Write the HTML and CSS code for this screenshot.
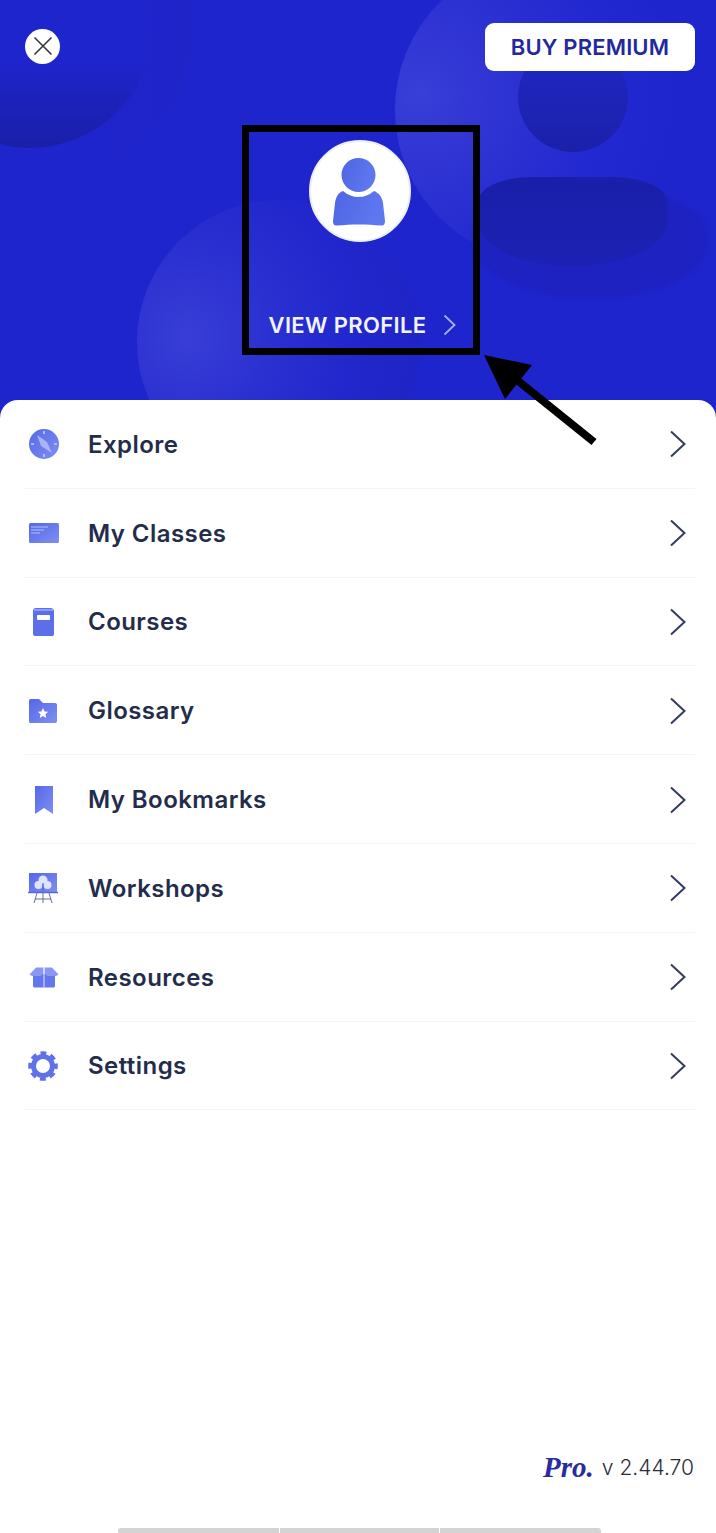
FILE: index.html
```html
<!DOCTYPE html>
<html lang="en">
<head>
<meta charset="utf-8">
<title>Menu</title>
<link rel="stylesheet" href="styles.css">
</head>
<body>
<svg class="defs" width="0" height="0" aria-hidden="true">
  <defs>
    <linearGradient id="g" x1="0" y1="0" x2="1" y2="1">
      <stop offset="0" stop-color="#5468e6"/>
      <stop offset="1" stop-color="#7f8ff2"/>
    </linearGradient>
    <linearGradient id="av" x1="0" y1="0" x2="1" y2="0.3">
      <stop offset="0" stop-color="#4f64e4"/>
      <stop offset="1" stop-color="#5f78f0"/>
    </linearGradient>
  </defs>
</svg>
<div class="app">
  <header class="hero">
    <span class="shape shape-tl-halo"></span>
    <span class="shape shape-tl"></span>
    <span class="shape shape-sphere-r"></span>
    <span class="shape shape-sphere-b"></span>
    <span class="shape shape-halo"></span>
    <span class="shape shape-head"></span>
    <span class="shape shape-body"></span>
    <div class="topbar">
      <button class="close" aria-label="Close">
        <svg width="22" height="22" viewBox="0 0 22 22"><path d="M2.500 2.500 19.500 19.500M19.500 2.500 2.500 19.500" fill="none" stroke="#33363f" stroke-width="1.600"/></svg>
      </button>
      <button class="premium">BUY PREMIUM</button>
    </div>
    <div class="profile">
      <div class="avatar">
        <svg width="54" height="68" viewBox="0 0 54 68">
          <circle cx="26.500" cy="17" r="17" fill="url(#av)"/>
          <path d="M11 33C16 37 21 39 26.500 39S37 37 42 33C47 35 50 39 51 45L53 63C53 66 52 68 49 67.500C36 66 18 66 5 67.500C2 68 1 66 1 63L3 45C4 39 6 35 11 33Z" fill="url(#av)"/>
        </svg>
      </div>
      <div class="view">
        <span>VIEW PROFILE</span>
        <svg width="13" height="22" viewBox="0 0 13 22"><path d="M1.500 1.500 11.500 11 1.500 20.500" fill="none" stroke="#a9aef0" stroke-width="1.800"/></svg>
      </div>
    </div>
  </header>

  <main class="sheet">
    <ul class="menu">
      <li class="row">
        <span class="ico"><svg width="32" height="32" viewBox="0 0 32 32">
          <circle cx="16" cy="16" r="15" fill="url(#g)"/>
          <path d="M9 7 19 14 24 25 13 18Z" fill="#a9b5f7"/>
          <path d="M16 3v3M16 26v3M3 16h3M26 16h3" stroke="#c5cdfb" stroke-width="1.600"/>
        </svg></span>
        <span class="label">Explore</span>
        <svg class="chev" width="18" height="28" viewBox="0 0 18 28"><path d="M2 1.500 15.500 14 2 26.500"/></svg>
      </li>
      <li class="row">
        <span class="ico"><svg width="32" height="22" viewBox="0 0 32 22">
          <rect x="1" y="1" width="30" height="20" rx="1.500" fill="url(#g)"/>
          <path d="M3 5h17M3 8h13M3 11h9" stroke="#b5c0fa" stroke-width="1.200"/>
        </svg></span>
        <span class="label">My Classes</span>
        <svg class="chev" width="18" height="28" viewBox="0 0 18 28"><path d="M2 1.500 15.500 14 2 26.500"/></svg>
      </li>
      <li class="row">
        <span class="ico ico-book"><svg width="24" height="30" viewBox="0 0 24 30">
          <path d="M2 4C2 2 3 1 5 1H20C21 1 23 2 23 4V27C23 28.500 22 29 21 29H4C3 29 2 28 2 27Z" fill="#5b6fe8"/>
          <path d="M3 3h19" stroke="#8d9cf4" stroke-width="2"/>
          <rect x="6" y="8" width="13" height="5" rx="1" fill="#fff"/>
        </svg></span>
        <span class="label">Courses</span>
        <svg class="chev" width="18" height="28" viewBox="0 0 18 28"><path d="M2 1.500 15.500 14 2 26.500"/></svg>
      </li>
      <li class="row">
        <span class="ico"><svg width="30" height="26" viewBox="0 0 30 26">
          <path d="M1 3C1 1.500 2 1 3 1H11L15 5H27C28.500 5 29 6 29 7V23C29 24.500 28 25 27 25H3C2 25 1 24.500 1 23Z" fill="url(#g)"/>
          <path d="M15 10 16.600 13.400 20.200 13.800 17.500 16.300 18.200 20 15 18.100 11.800 20 12.500 16.300 9.800 13.800 13.400 13.400Z" fill="#fff"/>
        </svg></span>
        <span class="label">Glossary</span>
        <svg class="chev" width="18" height="28" viewBox="0 0 18 28"><path d="M2 1.500 15.500 14 2 26.500"/></svg>
      </li>
      <li class="row">
        <span class="ico ico-mark"><svg width="20" height="30" viewBox="0 0 20 30">
          <path d="M1 1H19V29L10 23 1 29Z" fill="url(#g)"/>
        </svg></span>
        <span class="label">My Bookmarks</span>
        <svg class="chev" width="18" height="28" viewBox="0 0 18 28"><path d="M2 1.500 15.500 14 2 26.500"/></svg>
      </li>
      <li class="row">
        <span class="ico"><svg width="30" height="32" viewBox="0 0 30 32">
          <path d="M9 21 6 31M21 21 24 31M7 27H23M15 21V31" stroke="#59608c" stroke-width="0.900" fill="none"/>
          <rect x="1" y="1" width="28" height="20" fill="url(#g)"/>
          <path d="M0 20.500h30" stroke="#5468e6" stroke-width="1.500"/>
          <circle cx="15" cy="8" r="4.500" fill="#dfe4fe"/>
          <circle cx="10.500" cy="13" r="4" fill="#dfe4fe"/>
          <circle cx="19.500" cy="13" r="4" fill="#dfe4fe"/>
          <path d="M15 11v8" stroke="#5468e6" stroke-width="1.200"/>
        </svg></span>
        <span class="label">Workshops</span>
        <svg class="chev" width="18" height="28" viewBox="0 0 18 28"><path d="M2 1.500 15.500 14 2 26.500"/></svg>
      </li>
      <li class="row">
        <span class="ico ico-box"><svg width="30" height="22" viewBox="0 0 30 22">
          <path d="M4 8H26V20C26 21 25 21.500 24 21.500H6C5 21.500 4 21 4 20Z" fill="#6577ec"/>
          <path d="M0.500 8.500 7 1.500H14.500V8L11 10H3Z" fill="#8a98f3"/>
          <path d="M29.500 8.500 23 1.500H15.500V8L19 10H27Z" fill="#8a98f3"/>
          <path d="M15 2V21.500" stroke="#dfe4fe" stroke-width="1"/>
        </svg></span>
        <span class="label">Resources</span>
        <svg class="chev" width="18" height="28" viewBox="0 0 18 28"><path d="M2 1.500 15.500 14 2 26.500"/></svg>
      </li>
      <li class="row">
        <span class="ico"><svg width="30" height="30" viewBox="0 0 30 30">
          <circle cx="15" cy="15" r="12.400" fill="none" stroke="#5f72e8" stroke-width="4.800" stroke-dasharray="5.600 4.140" stroke-dashoffset="2.800"/>
          <circle cx="15" cy="15" r="9.500" fill="none" stroke="#5f72e8" stroke-width="5"/>
        </svg></span>
        <span class="label">Settings</span>
        <svg class="chev" width="18" height="28" viewBox="0 0 18 28"><path d="M2 1.500 15.500 14 2 26.500"/></svg>
      </li>
    </ul>
    <footer class="version">
      <span class="pro">Pro.</span>
      <span class="ver">v 2.44.70</span>
    </footer>
    <div class="handle">
      <span class="seg seg-a"></span>
      <span class="seg seg-b"></span>
      <span class="seg seg-c"></span>
    </div>
  </main>

  <div class="callout"></div>
  <svg class="arrow" width="130" height="100" viewBox="0 0 130 100">
    <path d="M2 2 50 12 23 46Z" fill="#000"/>
    <path d="M30 23 112 89" stroke="#000" stroke-width="8" fill="none"/>
  </svg>
</div>
</body>
</html>
```

FILE: styles.css
```css
* { box-sizing: border-box; }
html, body { margin: 0; padding: 0; }
body {
  width: 716px;
  height: 1533px;
  overflow: hidden;
  background: #fff;
  font-family: "Inter", "Liberation Sans", sans-serif;
}
.defs { position: absolute; }
.app {
  position: relative;
  width: 716px;
  height: 1533px;
  display: flex;
  flex-direction: column;
  overflow: hidden;
}

/* hero */
.hero {
  position: relative;
  height: 420px;
  flex: none;
  overflow: hidden;
  background: #1f25cd;
  padding: 23px 21px 0 25px;
}
.shape { position: absolute; display: block; border-radius: 50%; }
.shape-tl-halo {
  left: -130px; top: -130px; width: 322px; height: 318px;
  background: linear-gradient(90deg, #1f25cd 60%, #1e24c6 100%);
  opacity: 0.7;
}
.shape-tl {
  left: -92px; top: -92px; width: 244px; height: 240px;
  background: linear-gradient(180deg, #1f25cd 62%, #1c21ba 82%, #1a1fa8 100%);
}
.shape-sphere-r {
  left: 395px; top: -42px; width: 304px; height: 304px;
  background: radial-gradient(circle at 8% 45%, #383ed7 0%, #2c31d2 30%, #2329d0 55%, #1f25cd 80%);
}
.shape-sphere-b {
  left: 137px; top: 200px; width: 284px; height: 284px;
  background: radial-gradient(circle at 18% 48%, #383ed6 0%, #2b30d1 30%, #2127cc 60%, #1d22c2 100%);
}
.shape-halo {
  left: 475px; top: 190px; width: 232px; height: 108px;
  border-radius: 40% 40% 50% 50%;
  background: #1d22c0;
  filter: blur(2px);
}
.shape-head {
  left: 518px; top: 42px; width: 110px; height: 110px;
  background: linear-gradient(180deg, #2128c4, #1b20aa);
}
.shape-body {
  left: 478px; top: 177px; width: 189px; height: 89px;
  border-radius: 28% 28% 50% 50%;
  background: linear-gradient(180deg, #1a1fa9, #1c21b4);
}
.topbar {
  position: relative;
  display: flex;
  align-items: center;
  justify-content: space-between;
}
.close {
  width: 35px; height: 35px;
  margin-bottom: 2px;
  padding: 0;
  border: 0;
  border-radius: 50%;
  background: #fff;
  display: flex;
  align-items: center;
  justify-content: center;
}
.premium {
  width: 210px; height: 48px;
  border: 0;
  border-radius: 9px;
  background: #fff;
  color: #23299a;
  font: 600 22px "Inter", "Liberation Sans", sans-serif;
  letter-spacing: 0.15px;
}
.profile {
  position: relative;
  display: flex;
  flex-direction: column;
  align-items: center;
  margin-top: 69px;
}
.avatar {
  width: 102px; height: 102px;
  border-radius: 50%;
  background: #fff;
  border: 2px solid #eceef6;
  display: flex;
  align-items: center;
  justify-content: center;
  padding: 2px 2px 0 0;
}
.view {
  display: flex;
  align-items: center;
  gap: 17px;
  margin: 69px 0 0 5px;
  color: #f2f3ff;
  font-size: 22px;
  font-weight: 600;
  letter-spacing: 0.35px;
  line-height: 28px;
}

/* sheet */
.sheet {
  position: relative;
  flex: 1;
  margin-top: -20px;
  border-radius: 18px 18px 0 0;
  background: #fff;
  display: flex;
  flex-direction: column;
}
.menu { list-style: none; margin: 0; padding: 0 21px 0 25px; }
.row {
  height: 88.8px;
  display: flex;
  align-items: center;
  padding: 1px 8px 0 0;
  border-bottom: 1px solid #f3f3f5;
  color: #232c4b;
}
.ico {
  width: 38px;
  display: flex;
  align-items: center;
  padding-left: 3px;
  flex: none;
}
.ico-book { padding-left: 6px; }
.ico-mark { padding-left: 9px; }
.ico-box { padding-left: 4px; }
.label {
  margin-left: 25px;
  flex: 1;
  font-size: 24px;
  font-weight: 600;
  letter-spacing: 0.45px;
}
.chev path {
  fill: none;
  stroke: #333c60;
  stroke-width: 2;
}
.version {
  margin-top: auto;
  padding-right: 22px;
  display: flex;
  justify-content: flex-end;
  align-items: center;
  gap: 8px;
  height: 40px;
}
.pro {
  font: italic 700 29px "Liberation Serif", serif;
  color: #282c9f;
}
.ver {
  font-size: 21px;
  font-weight: 300;
  color: #2a2d3a;
}
.handle {
  display: flex;
  justify-content: center;
  gap: 1px;
  margin: 41px 0 0 2px;
}
.seg { height: 5px; background: #d4d4d4; }
.seg-a { width: 161px; border-radius: 3px 0 0 0; }
.seg-b { width: 159px; }
.seg-c { width: 161px; border-radius: 0 3px 0 0; }

/* annotation overlays */
.callout {
  position: absolute;
  left: 242px; top: 125px;
  width: 238px; height: 230px;
  border: 7.5px solid #000;
}
.arrow {
  position: absolute;
  left: 482px; top: 353px;
}
```
